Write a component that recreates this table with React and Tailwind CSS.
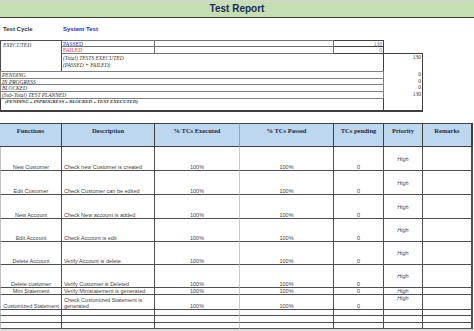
const rows = [
  { h: 'h-[24px]', fn: 'New Customer', desc: 'Check new Customer is created', ex: '100%', ps: '100%', pend: '0', pr: 'High' },
  { h: 'h-[24px]', fn: 'Edit Customer', desc: 'Check Customer can be edited', ex: '100%', ps: '100%', pend: '0', pr: 'High' },
  { h: 'h-[24px]', fn: 'New Account', desc: 'Check New account is added', ex: '100%', ps: '100%', pend: '0', pr: 'High' },
  { h: 'h-[23px]', fn: 'Edit Account', desc: 'Check Account is edit', ex: '100%', ps: '100%', pend: '0', pr: 'High' },
  { h: 'h-[23px]', fn: 'Delete Account', desc: 'Verify Account is delete', ex: '100%', ps: '100%', pend: '0', pr: 'High' },
  { h: 'h-[23px]', fn: 'Delete customer', desc: 'Verify Customer is Deleted', ex: '100%', ps: '100%', pend: '0', pr: 'High' },
  { h: 'h-[7px]', fn: 'Mini Statement', desc: 'Verify Ministatement is generated', ex: '100%', ps: '100%', pend: '0', pr: 'High' },
  { h: 'h-[15px]', fn: 'Customized Statement', desc: 'Check Customized Statement is generated', ex: '100%', ps: '100%', pend: '0', pr: 'High', wrap: true },
  { h: 'h-[6px]' },
  { h: 'h-[7px]' },
  { h: 'h-[6px]' },
]

const headers = ['Functions', 'Description', '% TCs Executed', '% TCs Passed', 'TCs pending', 'Priority', 'Remarks']

function Cell({ className = '', wrap = false, children }) {
  return (
    <div className={`border-r border-b border-[#505050] flex overflow-visible ${wrap ? 'whitespace-normal' : 'whitespace-nowrap'} ${className}`}>
      {children}
    </div>
  )
}

export default function App() {
  return (
    <div className="w-[474px] h-[331px] bg-white overflow-hidden font-['Liberation_Sans',sans-serif] text-[#444]">
      {/* banner */}
      <div className="h-[18px] border-t border-[#d4d4d4] bg-[#c5dfb3] border-b border-b-[#3a3a3a] flex items-center justify-center">
        <span className="text-[10px] font-bold text-[#1c2a5e] leading-none">Test Report</span>
      </div>

      {/* test cycle */}
      <div className="h-[22px] flex items-center text-[6px] font-bold">
        <span className="w-[63px] pl-[3px] text-[#333]">Test Cycle</span>
        <span className="text-[#2a2ad4]">System Test</span>
      </div>

      {/* summary block */}
      <div className="grid grid-cols-[62px_93px_179px_50px_39px] w-[423px] font-['Liberation_Serif',serif] italic text-[5.5px] leading-[7px] text-[#333]">
        <div className="row-span-3 border-t border-l border-r border-[#505050] pl-[2px] pt-[1px]">EXECUTED</div>
        <div className="h-[7px] border-t border-r border-b border-[#707070] text-[#2a2ad4] pl-[1px] not-italic">PASSED</div>
        <div className="h-[7px] border-t border-r border-b border-[#707070]"></div>
        <div className="h-[7px] border-t border-r border-b border-[#404040] text-right pr-[1px] text-[#6a6ae0] not-italic">130</div>
        <div className="h-[7px]"></div>

        <div className="h-[7px] border-r border-b border-[#707070] text-[#e03030] pl-[1px] not-italic">FAILED</div>
        <div className="h-[7px] border-r border-b border-[#707070]"></div>
        <div className="h-[7px] border-r border-b border-[#404040] text-right pr-[1px] text-[#e06060] not-italic">0</div>
        <div className="h-[7px] border-b border-[#404040]"></div>

        <div className="col-span-3 h-[17px] border-r border-[#404040] pl-[1px] pt-[1px] leading-[6.5px]">
          (Total) TESTS EXECUTED<br />(PASSED + FAILED)
        </div>
        <div className="h-[17px] border-r border-[#404040] text-right pr-[1px] not-italic">130</div>

        {['PENDING', 'IN PROGRESS', 'BLOCKED', '(Sub-Total) TEST PLANNED'].map((label, i) => (
          <div key={label} className="contents">
            <div className={`col-span-4 ${i === 1 ? 'h-[6px]' : 'h-[7px]'} border-t border-l border-r border-[#808080] pl-[1px] leading-[6px]`}>{label}</div>
            <div className={`${i === 1 ? 'h-[6px]' : 'h-[7px]'} border-r border-[#404040] text-right pr-[1px] not-italic leading-[6px]`}>{i === 3 ? '130' : '0'}</div>
          </div>
        ))}
        <div className="col-span-4 h-[14px] border-t border-l border-r border-b-2 border-[#404040] border-t-[#808080] pl-[4px] text-[5px] leading-[6px] tracking-[-0.1px] font-semibold">
          (PENDING + INPROGRESS + BLOCKED + TEST EXECUTED)
        </div>
        <div className="h-[14px] border-r border-b-2 border-[#404040]"></div>
      </div>

      {/* main table */}
      <div className="mt-[11px] grid grid-cols-[62px_93px_85px_94px_50px_39px_50px] w-[473px]">
        {headers.map((h, i) => (
          <div
            key={h}
            className={`h-[24px] bg-[#bdd7ee] border-t border-b border-[#404040] ${i === 2 ? 'border-r border-r-[#8aa8c4]' : 'border-r'} ${i === 6 ? 'border-r-2' : ''} flex justify-center pt-[4px] font-['Liberation_Serif',serif] font-bold text-[6.5px] leading-none text-[#1f2a44]`}
          >
            {h}
          </div>
        ))}

        {rows.map((r, idx) => (
          <div key={idx} className="contents text-[5.5px] leading-[6px] font-['Liberation_Sans',sans-serif]">
            <Cell className={`${r.h} justify-center items-end border-l border-l-[#c0c0c0]`}>{r.fn}</Cell>
            <Cell wrap={r.wrap} className={`${r.h} items-end pl-[2px] pr-[8px]`}>
              <span>{r.desc}</span>
            </Cell>
            <Cell className={`${r.h} justify-center items-end border-r-[#c8c8c8]`}>{r.ex}</Cell>
            <Cell className={`${r.h} justify-center items-end`}>{r.ps}</Cell>
            <Cell className={`${r.h} justify-center items-end`}>{r.pend}</Cell>
            <Cell className={`${r.h} justify-center ${r.h === 'h-[7px]' || r.h === 'h-[15px]' ? 'items-start' : 'items-center'} italic`}>{r.pr}</Cell>
            <Cell className={`${r.h} border-r-2`}></Cell>
          </div>
        ))}
      </div>
      <div className="h-[3px] bg-[#dcdcdc]"></div>
    </div>
  )
}
